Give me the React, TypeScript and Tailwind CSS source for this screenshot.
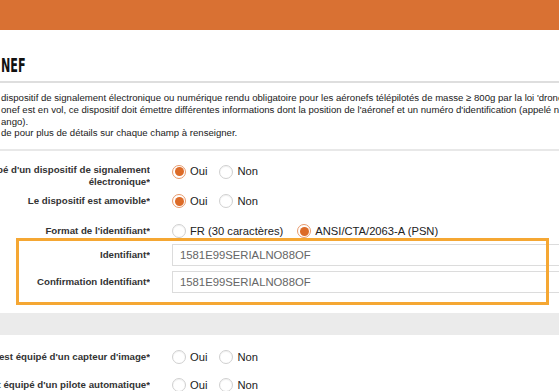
import React from 'react';

function Radio({ checked }: { checked?: boolean }) {
  return checked ? (
    <span className="w-[14px] h-[14px] shrink-0 rounded-full border border-[#e89a6c] bg-white flex items-center justify-center">
      <span className="w-[9px] h-[9px] rounded-full bg-[#dc6b28]" />
    </span>
  ) : (
    <span className="w-[14px] h-[14px] shrink-0 rounded-full border border-[#d0d0d0] bg-white shadow-[inset_0_1px_1px_rgba(0,0,0,0.06)]" />
  );
}

function Option({ label, checked }: { label: string; checked?: boolean }) {
  return (
    <label className="flex items-center gap-[4px] whitespace-nowrap">
      <Radio checked={checked} />
      <span className="text-[11.2px] text-[#222]">{label}</span>
    </label>
  );
}

function Label({ children }: { children: React.ReactNode }) {
  return (
    <div className="w-[150px] shrink-0 flex justify-end overflow-hidden">
      <span className="whitespace-nowrap font-bold text-[9.7px] text-[#333]">{children}</span>
    </div>
  );
}

function YesNo({ label, yes }: { label: string; yes?: boolean }) {
  return (
    <div className="flex items-center h-[20px]">
      <Label>{label}</Label>
      <div className="ml-[22px] flex items-center gap-[12px]">
        <Option label="Oui" checked={yes} />
        <Option label="Non" />
      </div>
    </div>
  );
}

function TextField({ label, value }: { label: string; value: string }) {
  return (
    <div className="flex items-center h-[22px]">
      <Label>{label}</Label>
      <div className="ml-[22px] w-[420px] shrink-0 h-[22px] border border-[#dcdcdc] bg-white flex items-center pl-[7px] text-[11.3px] text-[#666]">
        {value}
      </div>
    </div>
  );
}

export default function App() {
  return (
    <div className="relative w-[559px] h-[391px] overflow-hidden bg-white font-['Liberation_Sans',Arial,sans-serif]">
      <div className="h-[30px] bg-[#d97133]" />

      <div className="mt-[25px] h-[20px] pl-[1px]">
        <h1 className="origin-left scale-x-[0.62] text-[20px] leading-[20px] font-bold text-[#111] font-['DejaVu_Sans_Condensed','DejaVu_Sans',sans-serif]">
          NEF
        </h1>
      </div>
      <div className="mt-[6px] h-[2px] bg-[#dedede]" />

      <div className="pt-[9px] pl-[1px] text-[9.6px] leading-[11.8px] text-[#1a1a1a] whitespace-nowrap">
        <p>dispositif de signalement électronique ou numérique rendu obligatoire pour les aéronefs télépilotés de masse ≥ 800g par la loi 'drones'</p>
        <p>onef est en vol, ce dispositif doit émettre différentes informations dont la position de l'aéronef et un numéro d'identification (appelé numéro</p>
        <p>ango).</p>
        <p>de pour plus de détails sur chaque champ à renseigner.</p>
      </div>
      <div className="mt-[10px] h-[2px] bg-[#e8e8e8]" />

      <div className="mt-[12px] flex items-start">
        <div className="w-[150px] shrink-0 flex flex-col items-end overflow-hidden pt-[1px] font-bold text-[9.7px] leading-[12px] text-[#333] whitespace-nowrap">
          <span>L'aéronef est équipé d'un dispositif de signalement</span>
          <span>électronique*</span>
        </div>
        <div className="ml-[22px] flex items-center gap-[12px]">
          <Option label="Oui" checked />
          <Option label="Non" />
        </div>
      </div>

      <div className="mt-[3px]">
        <YesNo label="Le dispositif est amovible*" yes />
      </div>

      <div className="mt-[10px] flex items-center h-[20px]">
        <Label>Format de l'identifiant*</Label>
        <div className="ml-[22px] flex items-center gap-[14px]">
          <Option label="FR (30 caractères)" />
          <Option label="ANSI/CTA/2063-A (PSN)" checked />
        </div>
      </div>

      <div className="mt-[3px]">
        <TextField label="Identifiant*" value="1581E99SERIALNO88OF" />
      </div>
      <div className="mt-[5px]">
        <TextField label="Confirmation Identifiant*" value="1581E99SERIALNO88OF" />
      </div>

      <div className="mt-[20px] h-[22px] bg-[#ebebeb]" />

      <div className="mt-[12px]">
        <YesNo label="L'aéronef est équipé d'un capteur d'image*" />
      </div>
      <div className="mt-[8px]">
        <YesNo label="L'aéronef est équipé d'un pilote automatique*" />
      </div>

      <div className="absolute left-[16px] top-[238px] w-[533px] h-[67px] border-[3px] border-[#f5a733] pointer-events-none" />
    </div>
  );
}
